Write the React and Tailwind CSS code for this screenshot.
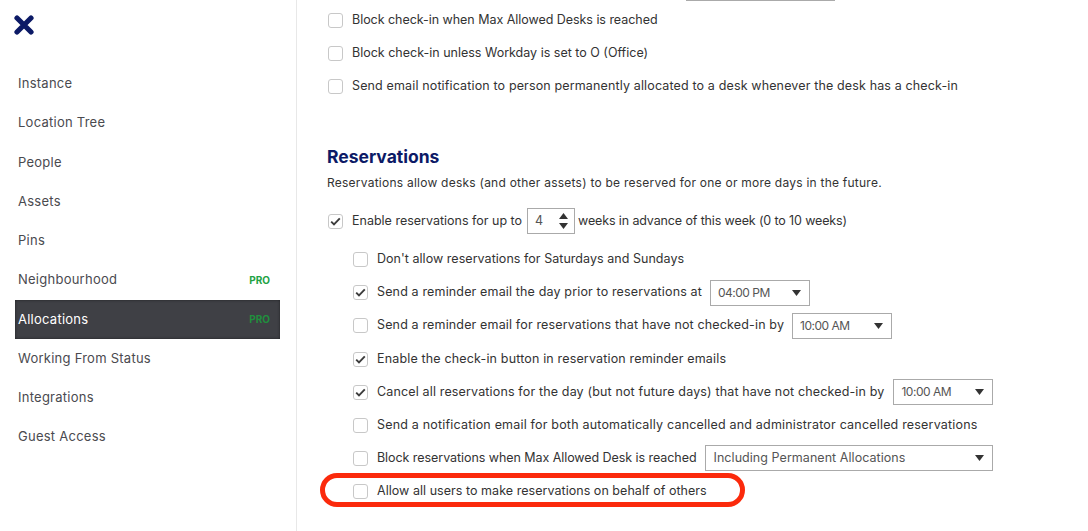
import React from 'react';

const navItems = [
  { label: 'Instance' },
  { label: 'Location Tree' },
  { label: 'People' },
  { label: 'Assets' },
  { label: 'Pins' },
  { label: 'Neighbourhood', pro: true },
  { label: 'Allocations', pro: true, active: true },
  { label: 'Working From Status' },
  { label: 'Integrations' },
  { label: 'Guest Access' },
];

const Checkbox = ({ checked }) => (
  <span className="w-[15px] h-[15px] shrink-0 rounded-[3px] border border-[#c8c8c8] bg-white flex items-center justify-center">
    {checked && (
      <svg width="11" height="9" viewBox="0 0 11 9" fill="none">
        <path d="M1.2 4.6 L4 7.4 L9.8 1.4" stroke="#3c3c3c" strokeWidth="1.9" />
      </svg>
    )}
  </span>
);

const Select = ({ value, className }) => (
  <span className={`h-[26px] border border-[#aaaaaa] bg-white flex items-center justify-between pl-[7px] pr-[7px] text-[#555555] ${className}`}>
    <span>{value}</span>
    <svg width="9" height="6" viewBox="0 0 9 6" className="mr-[1px]">
      <path d="M0 0 H9 L4.5 6 Z" fill="#333333" />
    </svg>
  </span>
);

const Row = ({ checked, children, className = '' }) => (
  <div className={`flex items-center gap-[9px] text-[12.5px] text-[#333333] whitespace-nowrap ${className}`}>
    <Checkbox checked={checked} />
    {children}
  </div>
);

const App = () => {
  return (
    <div className="w-[1088px] h-[531px] overflow-hidden bg-white flex font-['Inter','Open_Sans',sans-serif]">
      {/* sidebar */}
      <aside className="w-[297px] h-full shrink-0 border-r border-[#e8e8e8] pl-[15px] pr-[16px]">
        <div className="h-[64.3px] pt-[15px]">
          <svg width="20" height="20" viewBox="0 0 20 20" className="ml-[-1px]">
            <path d="M3 3 L17 17 M17 3 L3 17" stroke="#0c1a66" strokeWidth="5.2" strokeLinecap="round" />
          </svg>
        </div>
        <nav className="flex flex-col">
          {navItems.map((item) => (
            <div
              key={item.label}
              className={`h-[39.25px] flex items-center justify-between pl-[3px] pr-[10px] text-[13px] tracking-[0.25px] ${item.active ? 'bg-[#3f4045] text-white shadow-[inset_0_0_3px_rgba(0,0,0,0.5)]' : 'text-[#4a4a4f]'}`}
            >
              <span>{item.label}</span>
              {item.pro && <span className={`text-[10px] font-bold tracking-normal ${item.active ? 'text-[#1f8f3d]' : 'text-[#22a244]'}`}>PRO</span>}
            </div>
          ))}
        </nav>
      </aside>

      {/* main */}
      <main className="relative flex-1 pl-[31px]">
        <div className="h-px w-[149px] ml-[358px] bg-[#aaaaaa]" />
        <div className="mt-[3px]">
          <Row className="h-[33px] tracking-[-0.04px]">Block check-in when Max Allowed Desks is reached</Row>
          <Row className="h-[33px]">Block check-in unless Workday is set to O (Office)</Row>
          <Row className="h-[33px] tracking-[0.14px]">Send email notification to person permanently allocated to a desk whenever the desk has a check-in</Row>
        </div>

        <h2 className="mt-[41px] ml-[-1px] h-[26px] flex items-center text-[17.5px] font-bold text-[#0c1a66]">Reservations</h2>
        <p className="h-[26px] ml-[-1px] flex items-center text-[12px] tracking-[0.24px] text-[#333333]">Reservations allow desks (and other assets) to be reserved for one or more days in the future.</p>

        <Row checked className="mt-[7px] h-[36px]">
          <span className="flex items-center gap-[4px]">
            Enable reservations for up to
            <span className="ml-[1px] w-[48px] h-[26px] border border-[#aaaaaa] flex items-center justify-between pl-[7px] pr-[6px] text-[#555555]">
              4
              <span className="flex flex-col gap-[4px]">
                <svg width="9" height="6" viewBox="0 0 9 6"><path d="M0 6 H9 L4.5 0 Z" fill="#333333" /></svg>
                <svg width="9" height="6" viewBox="0 0 9 6"><path d="M0 0 H9 L4.5 6 Z" fill="#333333" /></svg>
              </span>
            </span>
            <span className="ml-[-1px] tracking-[-0.13px]">weeks in advance of this week (0 to 10 weeks)</span>
          </span>
        </Row>

        <div className="pl-[25px] mt-[4px]">
          <Row className="h-[33px] tracking-[0.04px]">Don't allow reservations for Saturdays and Sundays</Row>
          <Row checked className="h-[33px] tracking-[0.15px]">
            Send a reminder email the day prior to reservations at
            <Select value="04:00 PM" className="ml-[-1px] w-[100px] text-[12px] tracking-[-0.5px]" />
          </Row>
          <Row className="h-[33.5px] tracking-[0.15px]">
            Send a reminder email for reservations that have not checked-in by
            <Select value="10:00 AM" className="ml-[-1px] w-[100px] text-[12px] tracking-[-0.5px]" />
          </Row>
          <Row checked className="h-[33px] tracking-[0.16px]">Enable the check-in button in reservation reminder emails</Row>
          <Row checked className="h-[33px] tracking-[0.15px]">
            Cancel all reservations for the day (but not future days) that have not checked-in by
            <Select value="10:00 AM" className="w-[100px] text-[12px] tracking-[-0.5px]" />
          </Row>
          <Row className="h-[33px] tracking-[0.19px]">Send a notification email for both automatically cancelled and administrator cancelled reservations</Row>
          <Row className="h-[33px] tracking-[-0.06px]">
            Block reservations when Max Allowed Desk is reached
            <Select value="Including Permanent Allocations" className="ml-[-1px] w-[288px] text-[12.5px] tracking-[0.05px] !pl-[8px]" />
          </Row>
          <Row className="h-[33px] tracking-[0.04px]">Allow all users to make reservations on behalf of others</Row>
        </div>

        {/* red annotation */}
        <div className="absolute left-[23px] top-[473px] w-[425px] h-[34px] rounded-full border-[5px] border-[#fb2a0c]" />
      </main>
    </div>
  );
};

export default App;
